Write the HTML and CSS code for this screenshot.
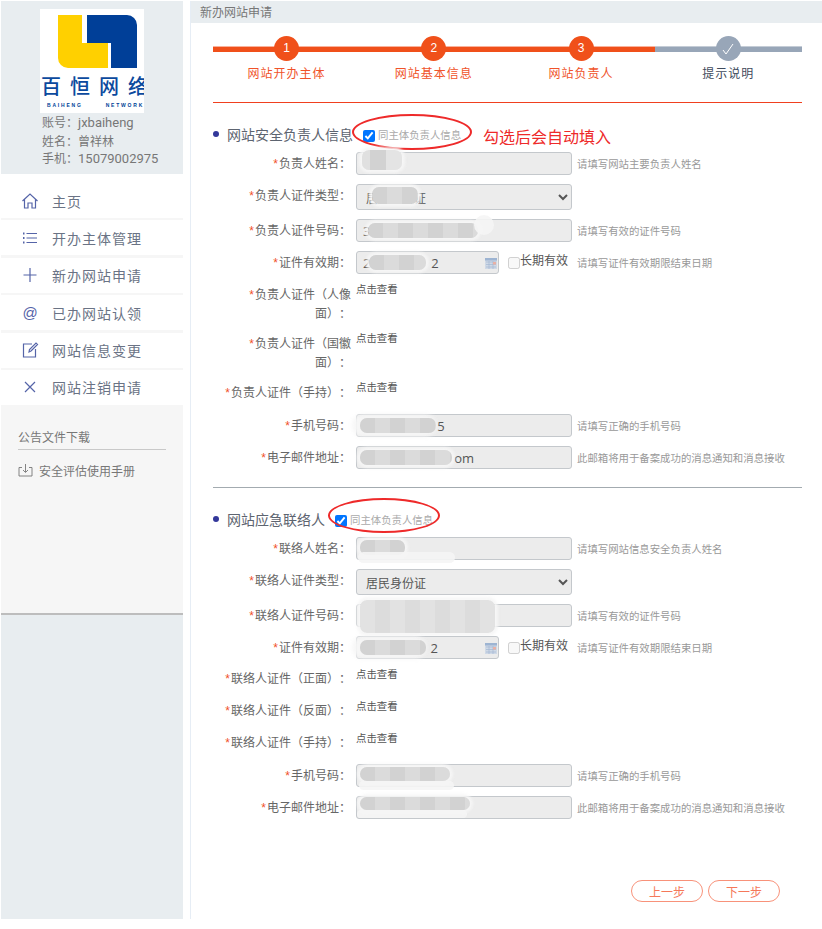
FILE: index.html
```html
<!DOCTYPE html>
<html lang="zh-CN">
<head>
<meta charset="utf-8">
<title>新办网站申请</title>
<link rel="stylesheet" href="styles.css">
</head>
<body>
<div class="app">
  <aside class="sidebar">
    <div class="profile">
      <div class="logo">
        <svg class="logo-mark" viewBox="0 0 104 64" width="104" height="64" aria-hidden="true">
          <path fill="#ffd000" d="M18 6h24v28h26v25H28a10 10 0 0 1-10-10z"/>
          <path fill="#003f98" d="M47 6h40a10 10 0 0 1 10 10v43H71V34H47z"/>
        </svg>
        <div class="logo-cn"><span>百</span><span>恒</span><span>网</span><span>络</span></div>
        <div class="logo-en"><span>BAIHENG</span><span>NETWORK</span></div>
      </div>
      <div class="acct">账号：<span class="acct-val">jxbaiheng</span></div>
      <div class="acct">姓名：曾祥林</div>
      <div class="acct">手机：<span class="acct-val">15079002975</span></div>
    </div>
    <div class="side-light">
      <nav class="nav">
        <a class="nav-item"><svg class="nav-icon" viewBox="0 0 18 18"><path d="M1.500 9 9 2l7.500 7M3.500 7.500V16H7v-5h4v5h3.500V7.500"/></svg><span>主页</span></a>
        <a class="nav-item"><svg class="nav-icon" viewBox="0 0 18 18"><path d="M5.500 4.500H16M5.500 9H16M5.500 13.500H16"/><path class="thick" d="M2 4.500h1.500M2 9h1.500M2 13.500h1.500"/></svg><span>开办主体管理</span></a>
        <a class="nav-item"><svg class="nav-icon" viewBox="0 0 18 18"><path d="M9 2v14M2.500 9h13"/></svg><span>新办网站申请</span></a>
        <a class="nav-item"><span class="nav-at">@</span><span>已办网站认领</span></a>
        <a class="nav-item"><svg class="nav-icon" viewBox="0 0 18 18"><path d="M11 3H2.500v13h12V8M8 11l.5-2.500L15 2l1.500 1.500L10 10z"/></svg><span>网站信息变更</span></a>
        <a class="nav-item"><svg class="nav-icon" viewBox="0 0 18 18"><path d="m4 4 10 10M14 4 4 14"/></svg><span>网站注销申请</span></a>
      </nav>
      <div class="notice">
        <div class="notice-title">公告文件下载</div>
        <a class="notice-file"><svg class="dl-icon" viewBox="0 0 15 14"><path d="M4 4.500H1v8.500h13V4.500h-3M7.500 1v8M5 7l2.500 2.500L10 7"/></svg>安全评估使用手册</a>
      </div>
    </div>
    <div class="side-fill"></div>
  </aside>

  <main class="main">
    <header class="main-head">新办网站申请</header>
    <div class="content">
      <ol class="steps">
        <li class="step done"><span class="step-dot">1</span><span class="step-name">网站开办主体</span></li>
        <li class="step done"><span class="step-dot">2</span><span class="step-name">网站基本信息</span></li>
        <li class="step done"><span class="step-dot">3</span><span class="step-name">网站负责人</span></li>
        <li class="step"><span class="step-dot"><svg viewBox="0 0 14 14" width="14" height="14"><path d="m2 8 3 4 7-10" fill="none" stroke="#fff" stroke-width="1"/></svg></span><span class="step-name">提示说明</span></li>
      </ol>
      <hr class="rule-red">

      <h2 class="sec-title"><i class="dot"></i>网站安全负责人信息
        <label class="same"><input type="checkbox" checked>同主体负责人信息</label>
        <span class="ring ring-a"></span>
        <span class="note">勾选后会自动填入</span>
      </h2>

      <div class="row">
        <label class="lbl"><b>*</b>负责人姓名：</label>
        <div class="field"><input class="ctl" type="text" value="" disabled><i class="blur b-name"></i></div>
        <span class="hint">请填写网站主要负责人姓名</span>
      </div>
      <div class="row">
        <label class="lbl"><b>*</b>负责人证件类型：</label>
        <div class="field"><select class="ctl sel"><option>居民身份证</option></select><i class="blur b-type"></i></div>
      </div>
      <div class="row">
        <label class="lbl"><b>*</b>负责人证件号码：</label>
        <div class="field"><input class="ctl" type="text" value="3" disabled><i class="blur b-id"></i></div>
        <span class="hint">请填写有效的证件号码</span>
      </div>
      <div class="row">
        <label class="lbl"><b>*</b>证件有效期：</label>
        <div class="field date"><input class="ctl" type="text" value="2                  2" disabled><i class="blur b-date"></i>
          <svg class="cal" viewBox="0 0 12 11"><rect width="12" height="11" fill="#cfd9e6"/><rect width="12" height="2.500" fill="#9db4d2"/><path d="M1 4h10M1 6.500h10M1 9h10M4 3v8M8 3v8" stroke="#a3b8d2" stroke-width=".7"/><rect x="8" y="4" width="3" height="2.500" fill="#e9b0a4"/></svg>
        </div>
        <label class="long"><input type="checkbox" disabled>长期有效</label>
        <span class="hint">请填写证件有效期限结束日期</span>
      </div>
      <div class="row view two">
        <label class="lbl"><b>*</b>负责人证件（人像面）：</label>
        <a class="see">点击查看</a>
      </div>
      <div class="row view two">
        <label class="lbl"><b>*</b>负责人证件（国徽面）：</label>
        <a class="see">点击查看</a>
      </div>
      <div class="row view tall">
        <label class="lbl"><b>*</b>负责人证件（手持）：</label>
        <a class="see">点击查看</a>
      </div>
      <div class="row">
        <label class="lbl"><b>*</b>手机号码：</label>
        <div class="field"><input class="ctl" type="text" value="                      5" disabled><i class="blur b-phone"></i></div>
        <span class="hint">请填写正确的手机号码</span>
      </div>
      <div class="row">
        <label class="lbl"><b>*</b>电子邮件地址：</label>
        <div class="field"><input class="ctl" type="text" value="                           om" disabled><i class="blur b-mail"></i></div>
        <span class="hint">此邮箱将用于备案成功的消息通知和消息接收</span>
      </div>

      <hr class="rule-gray">

      <h2 class="sec-title"><i class="dot"></i>网站应急联络人
        <label class="same"><input type="checkbox" checked>同主体负责人信息</label>
        <span class="ring ring-b"></span>
      </h2>

      <div class="row">
        <label class="lbl"><b>*</b>联络人姓名：</label>
        <div class="field"><input class="ctl" type="text" value="" disabled><i class="blur b-name2"></i></div>
        <span class="hint">请填写网站信息安全负责人姓名</span>
      </div>
      <div class="row">
        <label class="lbl"><b>*</b>联络人证件类型：</label>
        <div class="field"><select class="ctl sel"><option>居民身份证</option></select></div>
      </div>
      <div class="row">
        <label class="lbl"><b>*</b>联络人证件号码：</label>
        <div class="field"><input class="ctl" type="text" value="" disabled><i class="blur b-id2"></i></div>
        <span class="hint">请填写有效的证件号码</span>
      </div>
      <div class="row">
        <label class="lbl"><b>*</b>证件有效期：</label>
        <div class="field date"><input class="ctl" type="text" value="                    2" disabled><i class="blur b-date2"></i>
          <svg class="cal" viewBox="0 0 12 11"><rect width="12" height="11" fill="#cfd9e6"/><rect width="12" height="2.500" fill="#9db4d2"/><path d="M1 4h10M1 6.500h10M1 9h10M4 3v8M8 3v8" stroke="#a3b8d2" stroke-width=".7"/><rect x="8" y="4" width="3" height="2.500" fill="#e9b0a4"/></svg>
        </div>
        <label class="long"><input type="checkbox" disabled>长期有效</label>
        <span class="hint">请填写证件有效期限结束日期</span>
      </div>
      <div class="row view low">
        <label class="lbl"><b>*</b>联络人证件（正面）：</label>
        <a class="see">点击查看</a>
      </div>
      <div class="row view low">
        <label class="lbl"><b>*</b>联络人证件（反面）：</label>
        <a class="see">点击查看</a>
      </div>
      <div class="row view low">
        <label class="lbl"><b>*</b>联络人证件（手持）：</label>
        <a class="see">点击查看</a>
      </div>
      <div class="row">
        <label class="lbl"><b>*</b>手机号码：</label>
        <div class="field"><input class="ctl" type="text" value="" disabled><i class="blur b-phone2"></i></div>
        <span class="hint">请填写正确的手机号码</span>
      </div>
      <div class="row">
        <label class="lbl"><b>*</b>电子邮件地址：</label>
        <div class="field"><input class="ctl" type="text" value="" disabled><i class="blur b-mail2"></i></div>
        <span class="hint">此邮箱将用于备案成功的消息通知和消息接收</span>
      </div>

      <div class="actions">
        <button class="btn" type="button">上一步</button>
        <button class="btn" type="button">下一步</button>
      </div>
    </div>
  </main>
</div>
</body>
</html>
```

FILE: styles.css
```css
* { box-sizing: border-box; }
html, body { margin: 0; padding: 0; background: #fff; }
body {
  font-family: "Noto Sans CJK SC", "Liberation Sans", sans-serif;
  font-size: 12px;
  color: #666;
  text-spacing-trim: space-all;
}
.app { display: flex; height: 919px; padding-top: 1px; }

/* sidebar */
.sidebar { width: 182px; margin-left: 1px; display: flex; flex-direction: column; }
.profile { height: 173px; background: #e8edf0; padding: 8px 0 0 39px; margin-bottom: 9px; }
.logo { position: relative; width: 104px; height: 104px; background: #fff; overflow: hidden; }
.logo-mark { display: block; }
.logo-cn {
  display: flex; gap: 9px; padding-left: 1px; margin-top: -2px;
  font-size: 20px; line-height: 30px; font-weight: 500; color: #0b4a9e; white-space: nowrap;
  font-family: "Noto Sans CJK SC", sans-serif;
}
.logo-en {
  display: flex; gap: 23px; padding-left: 7px; margin-top: 1px;
  font-family: "Liberation Sans", sans-serif; font-size: 5px; line-height: 7px; font-weight: 700;
  letter-spacing: 1.800px; color: #003f98; white-space: nowrap;
}
.acct { font-size: 12px; line-height: 17.500px; padding-left: 2px; color: #777; white-space: nowrap; }
.acct-val { font-family: Roboto, sans-serif; font-size: 13px; }

.side-light { height: 432px; background: #f6f6f6; border-bottom: 2px solid #bdbdbd; }
.nav { display: flex; flex-direction: column; gap: 2.400px; }
.nav-item {
  height: 35px; background: #fff; display: flex; align-items: center;
  padding-left: 20px; gap: 13px; font-size: 14px; letter-spacing: 1px; color: #6a7385;
}
.nav-icon { width: 18px; height: 18px; fill: none; stroke: #5564a8; stroke-width: 1.200; flex: none; }
.nav-icon .thick { stroke-width: 2; }
.nav-at { width: 18px; text-align: center; font-size: 15px; letter-spacing: 0; color: #5564a8; font-family: "Liberation Sans", sans-serif; }
.notice { padding: 23px 17px 0 17px; }
.notice-title { font-size: 12px; line-height: 17px; padding-bottom: 4px; border-bottom: 1px solid #c9c9c9; color: #777; }
.notice-file { display: flex; align-items: center; gap: 6px; margin-top: 12px; font-size: 12px; line-height: 17px; color: #777; }
.dl-icon { width: 15px; height: 14px; fill: none; stroke: #777; stroke-width: .9; flex: none; }
.side-fill { flex: 1; background: #e8edf0; }

/* main */
.main { width: 632px; margin-left: 7px; border-left: 1px solid #e6edf5; display: flex; flex-direction: column; }
.main-head { height: 22px; line-height: 22px; padding-left: 9px; background: #e8edf0; font-size: 12px; color: #777; }
.content { padding: 13px 20px 0 22px; flex: 1; }

.steps { display: flex; list-style: none; margin: 0; padding: 0; }
.step { position: relative; flex: 1; display: flex; flex-direction: column; align-items: center; }
.step::before {
  content: ""; position: absolute; left: 0; right: 0; top: 10px; height: 5px;
  background: #98a6b8; border-top: 1px solid #c4ccd6;
}
.step.done::before { background: #f0501a; border-top-color: #f9b29b; }
.step-dot {
  position: relative; width: 25px; height: 25px; border-radius: 50%;
  background: #98a6b8; color: #fff; font-size: 12px; line-height: 25px; text-align: center;
  font-family: "Liberation Sans", sans-serif; display: flex; align-items: center; justify-content: center;
}
.step.done .step-dot { background: #f0501a; }
.step-name { margin-top: 3px; font-size: 12px; line-height: 18px; letter-spacing: 1px; color: #3e4a5c; }
.step.done .step-name { color: #f0532a; }

.rule-red { height: 1px; border: 0; margin: 20px 0 0; background: #f0401f; }
.rule-gray { height: 1px; border: 0; margin: 18px 0 0; background: #a3abb0; }

.sec-title {
  position: relative; display: flex; align-items: center; height: 24px; margin: 19px 0 6px;
  font-size: 14px; font-weight: 400; color: #5d6470; padding-left: 14px; white-space: nowrap;
}
.dot { position: absolute; left: 0; top: 9px; width: 6px; height: 6px; border-radius: 50%; background: #33389a; }
.same { display: flex; align-items: center; gap: 3px; margin-left: 10px; font-size: 10.400px; color: #aaa; }
.same input { width: 12px; height: 12px; margin: 3px 0 0; }
.ring { position: absolute; border: 2.500px solid #ee2a2a; border-radius: 50%; }
.ring-a { left: 139px; top: -8px; width: 120px; height: 36px; }
.ring-b { left: 115px; top: -9px; width: 112px; height: 35px; }
.note { position: absolute; left: 270px; top: 2px; font-size: 16px; line-height: 24px; color: #ee2a2a; }

.row { display: flex; align-items: center; margin-bottom: 9px; }
.lbl { width: 136px; margin: 0 5px 0 2px; flex: none; text-align: right; font-size: 12px; line-height: 21px; color: #666; align-self: flex-start; }
.lbl b { font-weight: 400; color: #f0502a; font-family: "Liberation Sans", sans-serif; margin-right: 1px; }
.field { position: relative; width: 216px; flex: none; }
.field.date { width: 143px; }
.ctl {
  display: block; width: 100%; height: 23px; padding: 0 6px; margin: 0;
  border: 1px solid #c4c8cc; border-radius: 3px; background: #ececec; color: #555;
  font-family: "Open Sans", "Noto Sans CJK SC", sans-serif; font-size: 13px; opacity: 1;
}
.sel { height: 26px; padding-left: 5px; font-family: "Noto Sans CJK SC", sans-serif; font-size: 12px; }
.hint { margin-left: 5px; font-size: 10.400px; color: #999; white-space: nowrap; }
.cal { position: absolute; right: 2px; top: 7px; width: 12px; height: 11px; }
.long { display: flex; align-items: flex-start; margin-left: 9px; font-size: 12px; line-height: 17px; color: #555; white-space: nowrap; align-self: flex-start; }
.long input { width: 12px; height: 12px; margin: 6px 0 0; }
.long + .hint { margin-left: 9px; }

.view { height: 23px; align-items: flex-start; }
.view.two { height: 40px; }
.view.tall { height: 24px; }
.view .lbl { line-height: 17px; margin-top: 2px; }
.view.low .lbl { margin-top: 1px; }
.see { font-size: 10.400px; line-height: 12px; color: #555; }

.blur {
  position: absolute; display: block; border-radius: 7px;
  background: repeating-linear-gradient(90deg, #d2d2d2 0 15px, #dbdbdb 15px 30px);
  box-shadow: 0 0 3px 3px rgba(246, 246, 246, .92);
}
.blur::after { content: ""; position: absolute; background: rgba(245, 245, 245, .9); border-radius: 8px; }
.b-name { left: 6px; top: -2px; width: 40px; height: 20px; background: repeating-linear-gradient(90deg, #e0e0e0 0 8px, #d2d2d2 8px 24px, #e4e4e4 24px 40px); }
.b-type { left: 16px; top: 3px; width: 46px; height: 17px; }
.b-id { left: 12px; top: 4px; width: 110px; height: 15px; }
.b-id::after { left: 106px; top: -8px; width: 20px; height: 20px; border-radius: 50%; }
.b-date { left: 13px; top: 4px; width: 57px; height: 15px; }
.b-phone { left: 4px; top: 4px; width: 76px; height: 15px; box-shadow: -4px 0 4px 4px rgba(246, 246, 246, .92); }
.b-mail { left: 4px; top: 4px; width: 92px; height: 15px; }
.b-name2 { left: 4px; top: 3px; width: 45px; height: 15px; }
.b-name2::after { left: -2px; top: 12px; width: 97px; height: 11px; }
.b-id2 { left: 4px; top: -4px; width: 135px; height: 33px; background: repeating-linear-gradient(90deg, #e2e2e2 0 15px, #dcdcdc 15px 30px); }
.b-date2 { left: 4px; top: 4px; width: 66px; height: 15px; box-shadow: -4px 0 4px 4px rgba(246, 246, 246, .92); }
.b-phone2 { left: 4px; top: 3px; width: 90px; height: 14px; }
.b-phone2::after { left: -1px; top: 14px; width: 95px; height: 9px; }
.b-mail2 { left: 4px; top: 1px; width: 110px; height: 13px; }
.b-mail2::after { left: -3px; top: 13px; width: 110px; height: 8px; }

.actions { display: flex; justify-content: flex-end; gap: 5px; margin-top: 61px; padding-right: 22px; }
.btn {
  width: 72px; height: 22px; padding: 0; border: 1.500px solid #f8927a; border-radius: 11px; background: #fff;
  color: #f5785a; font-family: "Noto Sans CJK SC", sans-serif; font-size: 12px;
}
```
